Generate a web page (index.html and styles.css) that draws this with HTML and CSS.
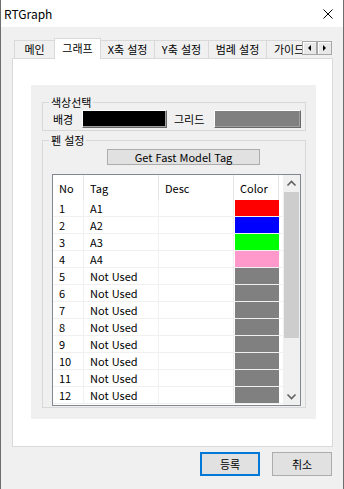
FILE: index.html
```html
<!DOCTYPE html>
<html lang="ko">
<head>
<meta charset="utf-8">
<title>RTGraph</title>
<link rel="stylesheet" href="styles.css">
</head>
<body>
<div class="window">
  <div class="titlebar">
    <span class="title">RTGraph</span>
    <svg class="close" width="10" height="10" viewBox="0 0 10 10"><path d="M0.5 0.5L9.5 9.5M9.5 0.5L0.5 9.5" stroke="#000" stroke-width="1" fill="none"/></svg>
  </div>
  <div class="tabbar">
    <div class="tabs">
      <div class="tab t-main">메인</div>
      <div class="tab tab-active">그래프</div>
      <div class="tab t-x">X축 설정</div>
      <div class="tab t-y">Y축 설정</div>
      <div class="tab t-leg">범례 설정</div>
      <div class="tab t-guide">가이드</div>
    </div>
    <div class="tab-scroll">
      <span class="sbtn"><span class="tri tri-left"></span></span>
      <span class="sbtn"><span class="tri tri-right"></span></span>
    </div>
  </div>
  <div class="page">
    <div class="inner">
      <div class="group g-color">
        <div class="group-title">색상선택</div>
        <div class="color-row">
          <span class="lbl lbl-bg">배경</span>
          <span class="swatch sw-black"></span>
          <span class="lbl lbl-grid">그리드</span>
          <span class="swatch sw-gray"></span>
        </div>
      </div>
      <div class="group g-pen">
        <div class="group-title">펜 설정</div>
        <button class="btn-tag">Get Fast Model Tag</button>
        <div class="list">
          <div class="table">
            <div class="thead">
              <div class="th">No</div>
              <div class="th">Tag</div>
              <div class="th">Desc</div>
              <div class="th">Color</div>
              <div class="th-end"></div>
            </div>
            <div class="row"><div class="td">1</div><div class="td">A1</div><div class="td"></div><div class="tc"><span class="pen pen-red"></span></div></div>
            <div class="row"><div class="td">2</div><div class="td">A2</div><div class="td"></div><div class="tc"><span class="pen pen-blue"></span></div></div>
            <div class="row"><div class="td">3</div><div class="td">A3</div><div class="td"></div><div class="tc"><span class="pen pen-green"></span></div></div>
            <div class="row"><div class="td">4</div><div class="td">A4</div><div class="td"></div><div class="tc"><span class="pen pen-pink"></span></div></div>
            <div class="row"><div class="td">5</div><div class="td">Not Used</div><div class="td"></div><div class="tc"><span class="pen pen-gray"></span></div></div>
            <div class="row"><div class="td">6</div><div class="td">Not Used</div><div class="td"></div><div class="tc"><span class="pen pen-gray"></span></div></div>
            <div class="row"><div class="td">7</div><div class="td">Not Used</div><div class="td"></div><div class="tc"><span class="pen pen-gray"></span></div></div>
            <div class="row"><div class="td">8</div><div class="td">Not Used</div><div class="td"></div><div class="tc"><span class="pen pen-gray"></span></div></div>
            <div class="row"><div class="td">9</div><div class="td">Not Used</div><div class="td"></div><div class="tc"><span class="pen pen-gray"></span></div></div>
            <div class="row"><div class="td">10</div><div class="td">Not Used</div><div class="td"></div><div class="tc"><span class="pen pen-gray"></span></div></div>
            <div class="row"><div class="td">11</div><div class="td">Not Used</div><div class="td"></div><div class="tc"><span class="pen pen-gray"></span></div></div>
            <div class="row"><div class="td">12</div><div class="td">Not Used</div><div class="td"></div><div class="tc"><span class="pen pen-gray"></span></div></div>
          </div>
          <div class="vscroll">
            <div class="arrow"><svg width="17" height="17" viewBox="0 0 17 17"><path d="M4.5 10.5L8.5 6.5L12.5 10.5" stroke="#606060" stroke-width="1.6" fill="none"/></svg></div>
            <div class="thumb"></div>
            <div class="track"></div>
            <div class="arrow"><svg width="17" height="17" viewBox="0 0 17 17"><path d="M4.5 6.5L8.5 10.5L12.5 6.5" stroke="#606060" stroke-width="1.6" fill="none"/></svg></div>
          </div>
        </div>
      </div>
    </div>
  </div>
  <div class="footer">
    <button class="btn btn-default">등록</button>
    <button class="btn">취소</button>
  </div>
</div>
</body>
</html>
```

FILE: styles.css
```css
* { box-sizing: border-box; }
html, body { margin: 0; padding: 0; }
body {
  width: 344px;
  height: 489px;
  overflow: hidden;
  background: #f0f0f0;
  font-family: "Noto Sans CJK KR", "Noto Sans", sans-serif;
  font-size: 11px;
  color: #000;
}
.window {
  width: 344px;
  height: 489px;
  border-left: 1px solid #6e6e6e;
  border-right: 1px solid #6e6e6e;
}
.titlebar {
  height: 27px;
  background: #fff;
  display: flex;
  align-items: center;
  justify-content: space-between;
  padding: 1px 10px 0 3px;
}
.title { font-size: 12px; line-height: 1; }
.close { display: block; }

/* tabs */
.tabbar {
  margin: 11px 0 0 13px;
  height: 21px;
  display: flex;
  align-items: flex-start;
  position: relative;
  z-index: 1;
}
.tabs {
  width: 288px;
  height: 21px;
  display: flex;
  align-items: flex-end;
  overflow: hidden;
  flex: none;
}
.tab {
  flex: none;
  height: 18px;
  margin-bottom: 1px;
  border-top: 1px solid #d9d9d9;
  border-right: 1px solid #d9d9d9;
  background: #f0f0f0;
  display: flex;
  align-items: center;
  justify-content: center;
  white-space: nowrap;
  line-height: 1;
}
.t-main { width: 40px; border-left: 1px solid #d9d9d9; border-right: none; }
.tab-active {
  width: 47px;
  height: 21px;
  margin-bottom: 0;
  background: #fff;
  border-left: 1px solid #d9d9d9;
  padding-bottom: 2px;
}
.t-x { width: 54px; }
.t-y { width: 54px; }
.t-leg { width: 58px; }
.t-guide { width: 60px; justify-content: flex-start; padding-left: 7px; }
.tab-scroll { display: flex; margin-top: 3px; }
.sbtn {
  width: 15px;
  height: 14px;
  background: #e8e8e8;
  border: 1px solid #a7a7a7;
  box-shadow: inset 1px 1px 0 #fff;
  display: flex;
  align-items: center;
  justify-content: center;
}
.sbtn + .sbtn { margin-left: 0; }
.tri { width: 0; height: 0; border-top: 3px solid transparent; border-bottom: 3px solid transparent; }
.tri-left { border-right: 3px solid #000; }
.tri-right { border-left: 3px solid #000; }

/* page */
.page {
  margin: -1px 9px 0 11px;
  width: 321px;
  height: 389px;
  background: #fff;
  border: 1px solid #d9d9d9;
  padding: 26px 0 0 18px;
}
.inner {
  width: 285px;
  height: 334px;
  background: #f0f0f0;
  padding: 17px 0 0 11px;
}
.group {
  width: 264px;
  border: 1px solid #d8d8d8;
}
.g-color { padding-bottom: 2px; }
.g-pen { margin-top: 9px; padding-bottom: 1px; }
.group-title {
  display: table;
  margin: -8px 0 0 6px;
  padding: 0 2px;
  line-height: 14px;
  background: #f0f0f0;
}
.color-row {
  display: flex;
  align-items: center;
  height: 18px;
  margin-top: 1px;
  padding-left: 10px;
}
.lbl { flex: none; }
.lbl-bg { width: 29px; }
.lbl-grid { width: 40px; margin-left: 7px; }
.swatch {
  flex: none;
  height: 18px;
  border-style: solid;
  border-width: 1px;
  border-color: #fff #696969 #696969 #fff;
  box-shadow: inset -1px -1px 0 #a0a0a0;
}
.sw-black { width: 85px; background: #000; }
.sw-gray { width: 87px; background: #808080; }

.btn-tag {
  display: block;
  margin: 2px 0 0 64px;
  width: 153px;
  height: 16px;
  padding: 0;
  border: 1px solid #adadad;
  background: #e1e1e1;
  font-family: inherit;
  font-size: 11px;
  line-height: 14px;
  color: #000;
}

/* list */
.list {
  margin: 9px 0 0 9px;
  width: 249px;
  height: 232px;
  border: 1px solid #828790;
  background: #fff;
  display: flex;
}
.table { width: 230px; flex: none; }
.thead, .row {
  display: grid;
  grid-template-columns: 31px 75px 75px 45px 4px;
}
.thead { height: 25px; }
.th {
  border-right: 1px solid #e5e5e5;
  padding-left: 6px;
  display: flex;
  align-items: center;
  padding-top: 1px;
}
.row { height: 17px; border-bottom: 1px solid #f0f0f0; }
.td {
  border-right: 1px solid #f0f0f0;
  padding-left: 6px;
  display: flex;
  align-items: center;
  line-height: 1;
  white-space: nowrap;
}
.tc { display: flex; }
.pen { display: block; width: 44px; height: 16px; margin-left: 1px; }
.pen-red { background: #ff0000; }
.pen-blue { background: #0000ff; }
.pen-green { background: #00ff00; }
.pen-pink { background: #ff99cc; }
.pen-gray { background: #808080; }

.vscroll {
  width: 17px;
  flex: none;
  background: #f0f0f0;
  display: flex;
  flex-direction: column;
}
.arrow { height: 17px; flex: none; }
.arrow svg { display: block; }
.thumb { height: 146px; margin: 0 1px; background: #cdcdcd; flex: none; }
.track { flex: 1; }

/* footer */
.footer {
  display: flex;
  justify-content: flex-end;
  gap: 12px;
  margin-top: 5px;
  padding-right: 11px;
}
.btn {
  width: 60px;
  height: 24px;
  padding: 0;
  background: #e1e1e1;
  border: 1px solid #adadad;
  font-family: inherit;
  font-size: 11px;
  color: #000;
}
.btn-default { border: 2px solid #0078d7; }
```
